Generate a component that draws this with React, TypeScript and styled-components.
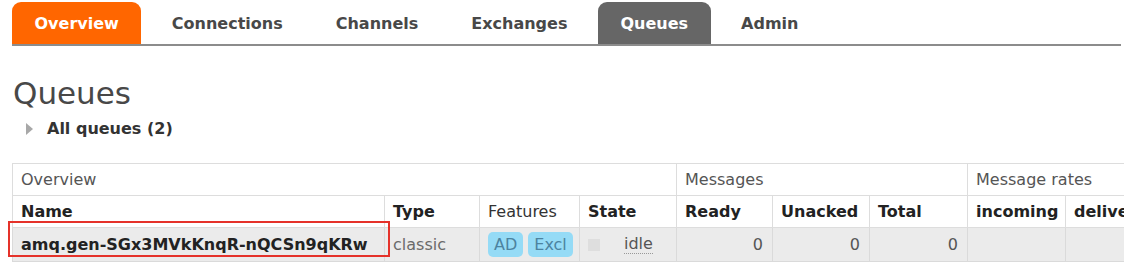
import React from "react";
import styled, { createGlobalStyle, css } from "styled-components";

const GlobalStyle = createGlobalStyle`
  html, body {
    margin: 0;
    padding: 0;
    background: #ffffff;
    overflow: hidden;
  }
  body {
    font-family: "DejaVu Sans", Verdana, sans-serif;
    font-size: 16px;
    color: #333333;
  }
`;

const Page = styled.div`
  padding: 0 3px 0 12px;
`;

const Menu = styled.ul`
  display: flex;
  list-style: none;
  margin: 0;
  padding: 2px 0 0 0;
  border-bottom: 2px solid #8c8c8c;
`;

type TabKind = "home" | "current" | "plain";

const Tab = styled.li<{ $kind: TabKind }>`
  padding: 12px 22.5px 10px;
  margin-right: 8px;
  line-height: 20px;
  font-weight: bold;
  border-radius: 9px 9px 0 0;
  color: #484848;
  ${(p) =>
    p.$kind === "home" &&
    css`
      background: #ff6600;
      color: #ffffff;
    `}
  ${(p) =>
    p.$kind === "current" &&
    css`
      background: #666666;
      color: #ffffff;
    `}
`;

const Heading = styled.h1`
  margin: 29px 0 0 1px;
  font-size: 31px;
  line-height: 36px;
  font-weight: normal;
  color: #484848;
`;

const Toggle = styled.div`
  display: flex;
  align-items: center;
  gap: 14px;
  margin-top: 8px;
  padding-left: 14px;
  font-weight: bold;
  line-height: 20px;
  color: #333333;
`;

const Arrow = styled.span`
  width: 0;
  height: 0;
  border-left: 7px solid #a8a8a8;
  border-top: 6px solid transparent;
  border-bottom: 6px solid transparent;
`;

const TableWrap = styled.div`
  position: relative;
  margin-top: 24px;
`;

const Table = styled.table`
  border-collapse: collapse;
  table-layout: fixed;
  width: 1153px;
`;

const GroupTh = styled.th`
  border: 1px solid #dddddd;
  padding: 0 8px;
  height: 31px;
  line-height: 20px;
  font-weight: normal;
  text-align: left;
  color: #555555;
  white-space: nowrap;
`;

const ColTh = styled.th<{ $plain?: boolean }>`
  border: 1px solid #dddddd;
  padding: 0 8px;
  height: 31px;
  line-height: 20px;
  font-weight: ${(p) => (p.$plain ? "normal" : "bold")};
  text-align: left;
  color: ${(p) => (p.$plain ? "#333333" : "#222222")};
  white-space: nowrap;
  overflow: hidden;
`;

const Td = styled.td<{ $num?: boolean; $bold?: boolean; $muted?: boolean }>`
  border: 1px solid #dadada;
  background: #ebebeb;
  padding: 0 ${(p) => (p.$num ? "9px" : "8px")} 0 8px;
  height: 33px;
  line-height: 20px;
  white-space: nowrap;
  overflow: hidden;
  text-align: ${(p) => (p.$num ? "right" : "left")};
  font-weight: ${(p) => (p.$bold ? "bold" : "normal")};
  color: ${(p) => (p.$bold ? "#222222" : p.$muted ? "#6a6a6a" : "#555555")};
`;

const Badges = styled.div`
  display: flex;
  align-items: center;
  gap: 5px;
`;

const Badge = styled.span`
  display: inline-block;
  padding: 0 6px;
  line-height: 25px;
  border-radius: 5px;
  background: #95dbf6;
  color: #4c83a0;
`;

const StateBox = styled.div`
  display: flex;
  align-items: center;
`;

const Square = styled.span`
  width: 12px;
  height: 12px;
  background: #dedede;
  margin-right: 24px;
`;

const Abbr = styled.abbr`
  text-decoration: none;
  border-bottom: 1px dotted #999999;
  line-height: 18px;
`;

const Highlight = styled.div`
  position: absolute;
  left: -4px;
  top: 58px;
  width: 382px;
  height: 36px;
  border: 2px solid #e5322a;
  box-sizing: border-box;
  pointer-events: none;
`;

const tabs: { label: string; kind: TabKind }[] = [
  { label: "Overview", kind: "home" },
  { label: "Connections", kind: "plain" },
  { label: "Channels", kind: "plain" },
  { label: "Exchanges", kind: "plain" },
  { label: "Queues", kind: "current" },
  { label: "Admin", kind: "plain" },
];

const widths = [372, 95, 100, 97, 96, 97, 98, 98, 100];

export default function App() {
  return (
    <>
      <GlobalStyle />
      <Page>
        <Menu>
          {tabs.map((t) => (
            <Tab key={t.label} $kind={t.kind}>
              {t.label}
            </Tab>
          ))}
        </Menu>
        <Heading>Queues</Heading>
        <Toggle>
          <Arrow />
          <span>All queues (2)</span>
        </Toggle>
        <TableWrap>
          <Table>
            <colgroup>
              {widths.map((w, i) => (
                <col key={i} style={{ width: w }} />
              ))}
            </colgroup>
            <thead>
              <tr>
                <GroupTh colSpan={4}>Overview</GroupTh>
                <GroupTh colSpan={3}>Messages</GroupTh>
                <GroupTh colSpan={2}>Message rates</GroupTh>
              </tr>
              <tr>
                <ColTh>Name</ColTh>
                <ColTh>Type</ColTh>
                <ColTh $plain>Features</ColTh>
                <ColTh>State</ColTh>
                <ColTh>Ready</ColTh>
                <ColTh>Unacked</ColTh>
                <ColTh>Total</ColTh>
                <ColTh>incoming</ColTh>
                <ColTh>deliver / get</ColTh>
              </tr>
            </thead>
            <tbody>
              <tr>
                <Td $bold>amq.gen-SGx3MVkKnqR-nQCSn9qKRw</Td>
                <Td $muted>classic</Td>
                <Td>
                  <Badges>
                    <Badge>AD</Badge>
                    <Badge>Excl</Badge>
                  </Badges>
                </Td>
                <Td>
                  <StateBox>
                    <Square />
                    <Abbr title="idle">idle</Abbr>
                  </StateBox>
                </Td>
                <Td $num>0</Td>
                <Td $num>0</Td>
                <Td $num>0</Td>
                <Td></Td>
                <Td></Td>
              </tr>
            </tbody>
          </Table>
          <Highlight />
        </TableWrap>
      </Page>
    </>
  );
}
